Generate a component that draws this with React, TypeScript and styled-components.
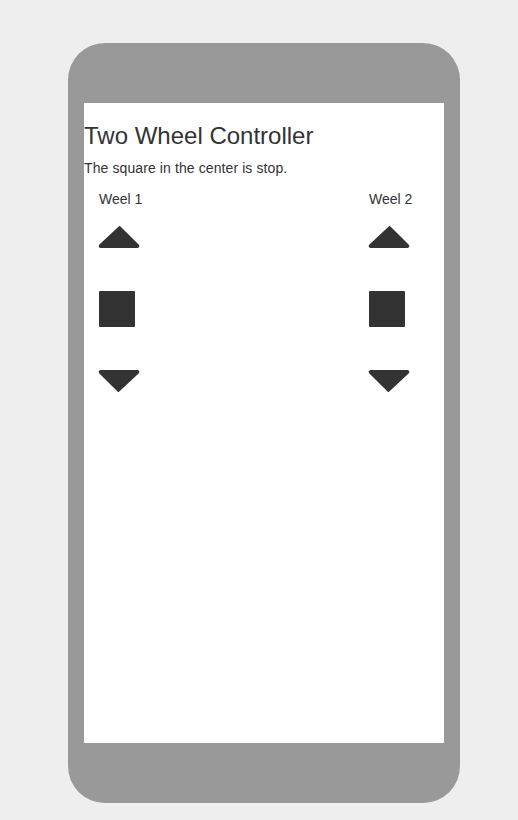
import React, { FC } from 'react';
import styled, { createGlobalStyle } from 'styled-components';

const GlobalStyle = createGlobalStyle`
  html, body {
    margin: 0;
    padding: 0;
    background: #eeeeee;
  }
  body {
    font-family: 'Liberation Sans', Arial, Helvetica, sans-serif;
    font-size: 14px;
    line-height: 1.42857;
    color: #333;
  }
`;

type Dir = 'up' | 'stop' | 'down';

const ControlIcon: FC<{ dir: Dir }> = ({ dir }) => {
  if (dir === 'stop') {
    return (
      <svg width="36" height="36" viewBox="0 0 36 36">
        <rect x="0" y="0" width="36" height="36" rx="1" fill="#333" />
      </svg>
    );
  }
  // rounded caret, 42 wide x 23 tall
  const up = 'M21 1.2 Q21.6 0.6 22.2 1.2 L40.6 19.6 Q42.6 22 39.6 23 L2.4 23 Q-0.6 22 1.4 19.6 Z';
  return (
    <Caret width="42" height="24" viewBox="0 0 42 24">
      <path d={up} fill="#333" transform={dir === 'down' ? 'rotate(180 21 12)' : undefined} />
    </Caret>
  );
};

const Wheel: FC<{ label: string }> = ({ label }) => (
  <Column>
    <Label>{label}</Label>
    <Controls>
      <ControlBtn aria-label="forward">
        <ControlIcon dir="up" />
      </ControlBtn>
      <ControlBtn aria-label="stop">
        <ControlIcon dir="stop" />
      </ControlBtn>
      <ControlBtn aria-label="backward">
        <ControlIcon dir="down" />
      </ControlBtn>
    </Controls>
  </Column>
);

const App: FC = () => {
  return (
    <>
      <GlobalStyle />
      <Phone>
        <Screen>
          <Title>Two Wheel Controller</Title>
          <Description>The square in the center is stop.</Description>
          <WheelRow>
            <Wheel label="Weel 1" />
            <Wheel label="Weel 2" />
          </WheelRow>
        </Screen>
      </Phone>
    </>
  );
};

export default App;

const Phone = styled.div`
  width: 392px;
  height: 760px;
  box-sizing: border-box;
  margin: 43px 0 0 68px;
  padding: 60px 16px;
  background-color: #999999;
  border-radius: 37px;
`;

const Screen = styled.main`
  display: flow-root;
  width: 360px;
  height: 640px;
  background-color: #ffffff;
`;

const Title = styled.h3`
  margin: 20px 0 10px;
  font-size: 24px;
  font-weight: 500;
  line-height: 1.1;
`;

const Description = styled.p`
  margin: 0 0 10px;
  letter-spacing: 0.1px;
`;

const WheelRow = styled.div`
  display: grid;
  grid-template-columns: 270px 90px;
`;

const Column = styled.section`
  padding: 0 15px;
`;

const Label = styled.div`
  line-height: 20px;
`;

const Controls = styled.div`
  display: flex;
  flex-direction: column;
  align-items: flex-start;
  row-gap: 28px;
  margin-top: 6px;
`;

const ControlBtn = styled.button`
  display: flex;
  align-items: center;
  height: 44px;
  padding: 0;
  border: none;
  background: none;
  cursor: pointer;
`;

const Caret = styled.svg`
  margin-left: -1px;
`;
